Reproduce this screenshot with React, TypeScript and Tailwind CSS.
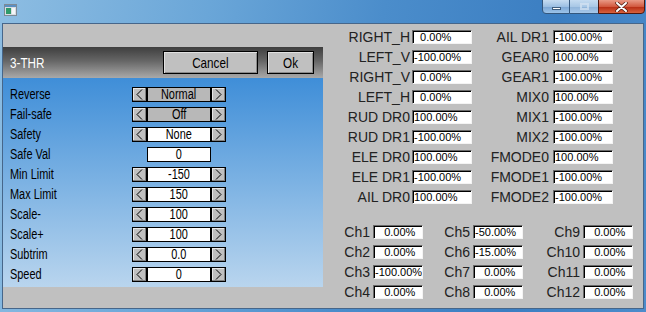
import React from "react";

const sans = "font-['Liberation_Sans',Arial,sans-serif]";

const channelRows = [
  { label: "Reverse", value: "Normal", kind: "gray" },
  { label: "Fail-safe", value: "Off", kind: "gray" },
  { label: "Safety", value: "None", kind: "spin" },
  { label: "Safe Val", value: "0", kind: "plain" },
  { label: "Min Limit", value: "-150", kind: "spin" },
  { label: "Max Limit", value: "150", kind: "spin" },
  { label: "Scale-", value: "100", kind: "spin" },
  { label: "Scale+", value: "100", kind: "spin" },
  { label: "Subtrim", value: "0.0", kind: "spin" },
  { label: "Speed", value: "0", kind: "spin" },
];

const inputs = [
  ["RIGHT_H", "  0.00%", "AIL DR1", "-100.00%"],
  ["LEFT_V", "-100.00%", "GEAR0", "100.00%"],
  ["RIGHT_V", "  0.00%", "GEAR1", "-100.00%"],
  ["LEFT_H", "  0.00%", "MIX0", "100.00%"],
  ["RUD DR0", "100.00%", "MIX1", "-100.00%"],
  ["RUD DR1", "-100.00%", "MIX2", "-100.00%"],
  ["ELE DR0", "100.00%", "FMODE0", "100.00%"],
  ["ELE DR1", "-100.00%", "FMODE1", "-100.00%"],
  ["AIL DR0", "100.00%", "FMODE2", "-100.00%"],
];

const channels = [
  ["Ch1", "   0.00%", "Ch5", "-50.00%", "Ch9", "   0.00%"],
  ["Ch2", "   0.00%", "Ch6", "-15.00%", "Ch10", "   0.00%"],
  ["Ch3", "-100.00%", "Ch7", "   0.00%", "Ch11", "   0.00%"],
  ["Ch4", "   0.00%", "Ch8", "   0.00%", "Ch12", "   0.00%"],
];

// the device UI uses a thin condensed font; squeeze Liberation Sans to match
const Narrow = ({ children, center }: { children: React.ReactNode; center?: boolean }) => (
  <span
    className={`inline-block whitespace-nowrap scale-x-[0.78] ${center ? "origin-center" : "origin-left"}`}
  >
    {children}
  </span>
);

const Arrow = ({ dir }: { dir: "left" | "right" }) => (
  <div className="w-[15px] h-[15px] border border-black bg-[#c0c0c0] shadow-[inset_-1px_-1px_0_#808080,inset_1px_1px_0_#e8e8e8] flex items-center justify-center">
    <svg width="7" height="11" viewBox="0 0 7 11">
      {dir === "left" ? (
        <polyline points="6,0.5 1,5.5 6,10.5" fill="none" stroke="#000" strokeWidth="1" />
      ) : (
        <polyline points="1,0.5 6,5.5 1,10.5" fill="none" stroke="#000" strokeWidth="1" />
      )}
    </svg>
  </div>
);

const ValueBox = ({ value, width }: { value: string; width: string }) => (
  <div
    className={`${width} h-[14px] bg-white border-t border-l border-t-[#696969] border-l-[#696969] border-b border-r border-b-[#f4f4f4] border-r-[#f4f4f4] shadow-[inset_1px_1px_0_#000] flex items-center pl-[1px] text-[11px] leading-none text-black whitespace-pre overflow-hidden ${sans}`}
  >
    {value}
  </div>
);

const Spinner = ({ value, kind }: { value: string; kind: string }) => {
  const field = (
    <div
      className={`w-[64px] h-[15px] border border-black flex items-center justify-center text-[14px] leading-none text-black ${
        kind === "gray" ? "bg-[#b8b8b8]" : "bg-white"
      }`}
    >
      <Narrow center>{value}</Narrow>
    </div>
  );
  if (kind === "plain") {
    return <div className="flex ml-[15px]">{field}</div>;
  }
  return (
    <div className="flex">
      <Arrow dir="left" />
      {field}
      <Arrow dir="right" />
    </div>
  );
};

const CaptionButtons = () => (
  <div className="flex h-[15px] mr-[1px] -mt-[1px]">
    <div className="w-[28px] h-full rounded-bl-[4px] border border-[#34577d] bg-[linear-gradient(#c6dcf1,#9dc0e3_50%,#7ba5d3_51%,#9cc4ea)] flex items-center justify-center">
      <div className="w-[9px] h-[3px] bg-white border border-[#3e5d7d] mt-[4px]" />
    </div>
    <div className="w-[28px] h-full border-y border-[#34577d] bg-[linear-gradient(#c6dcf1,#a9c8e6_50%,#8fb3d9_51%,#a6c8ea)] flex items-center justify-center">
      <div className="w-[9px] h-[7px] border-2 border-[#d6e4f2] opacity-70" />
    </div>
    <div className="w-[47px] h-full rounded-br-[4px] border border-[#4d1810] bg-[linear-gradient(#e99a86,#d25a40_50%,#b52a12_51%,#d8623d)] flex items-center justify-center">
      <svg width="13" height="10" viewBox="0 0 13 10">
        <path d="M2 1 L11 9 M11 1 L2 9" stroke="#4d1d12" strokeWidth="3.4" strokeLinecap="round" />
        <path d="M2 1 L11 9 M11 1 L2 9" stroke="#fff" strokeWidth="2" strokeLinecap="round" />
      </svg>
    </div>
  </div>
);

export default function App() {
  return (
    <div className="w-[646px] h-[312px] overflow-hidden flex flex-col bg-[linear-gradient(100deg,#8dbde2_0%,#6aa6d8_30%,#4b8dcb_55%,#3b7ec2_80%,#4c8ccb_100%)]">
      {/* title bar */}
      <div className="h-[23px] flex items-start justify-between">
        <svg className="ml-[4px] mt-[4px]" width="13" height="12" viewBox="0 0 13 12">
          <rect x="0.5" y="0.5" width="12" height="11" fill="#d8dde2" stroke="#7d8a96" />
          <rect x="1" y="1" width="11" height="2" fill="#5b8fc2" />
          <rect x="2" y="4" width="5" height="6" fill="#2f9a6a" />
          <rect x="8" y="4" width="3" height="6" fill="#f4f6f8" />
        </svg>
        <CaptionButtons />
      </div>

      {/* client area */}
      <div className="mx-[2px] h-[286px] border border-[#46668a] bg-[#c0c0c0] flex">
        {/* channel panel */}
        <div className={`w-[320px] pt-[23px] ${sans}`}>
          <div className="h-[31px] bg-[linear-gradient(#3e3e3e,#666_45%,#a9a9a9)] flex items-center pl-[7px] pr-[9px]">
            <span className="text-white text-[15px] leading-none flex-1">
              <Narrow>3-THR</Narrow>
            </span>
            <button className="w-[95px] h-[23px] border border-black bg-[#c0c0c0] shadow-[inset_1px_1px_0_#e0e0e0,inset_-1px_-1px_0_#8a8a8a] text-[15px] leading-none text-black">
              <Narrow center>Cancel</Narrow>
            </button>
            <button className="ml-[9px] w-[47px] h-[23px] border border-black bg-[#c0c0c0] shadow-[inset_1px_1px_0_#e0e0e0,inset_-1px_-1px_0_#8a8a8a] text-[15px] leading-none text-black">
              <Narrow center>Ok</Narrow>
            </button>
          </div>
          <div className="h-[209px] pt-[6px] bg-[linear-gradient(#3f8ed8,#7cb2e3_50%,#b9d5ee)]">
            {channelRows.map((row) => (
              <div key={row.label} className="h-[20px] flex items-center pl-[7px]">
                <span className="w-[122px] text-[14px] leading-none text-black">
                  <Narrow>{row.label}</Narrow>
                </span>
                <Spinner value={row.value} kind={row.kind} />
              </div>
            ))}
          </div>
        </div>

        {/* inputs & outputs */}
        <div className={`flex-1 pt-[3px] text-[14px] leading-none text-[#222] ${sans}`}>
          {inputs.map(([l1, v1, l2, v2]) => (
            <div key={l1} className="h-[20px] flex items-center pl-[3px]">
              <span className="w-[84px] text-right">{l1}</span>
              <div className="ml-[2px]">
                <ValueBox value={v1} width="w-[60px]" />
              </div>
              <span className="w-[77px] text-right">{l2}</span>
              <div className="ml-[4px]">
                <ValueBox value={v2} width="w-[60px]" />
              </div>
            </div>
          ))}
          <div className="mt-[15px]">
            {channels.map(([a, va, b, vb, c, vc]) => (
              <div key={a} className="h-[20px] flex items-center pl-[17px]">
                <span className="w-[30px] text-right">{a}</span>
                <div className="ml-[3px]">
                  <ValueBox value={va} width="w-[50px]" />
                </div>
                <span className="w-[47px] text-right">{b}</span>
                <div className="ml-[3px]">
                  <ValueBox value={vb} width="w-[50px]" />
                </div>
                <span className="w-[57px] text-right">{c}</span>
                <div className="ml-[3px]">
                  <ValueBox value={vc} width="w-[50px]" />
                </div>
              </div>
            ))}
          </div>
        </div>
      </div>
    </div>
  );
}
